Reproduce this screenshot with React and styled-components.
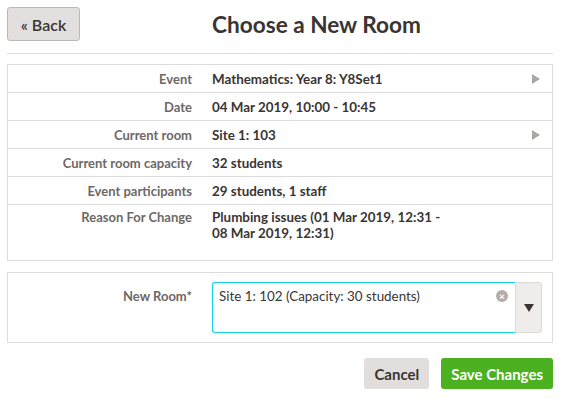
import styled, { createGlobalStyle } from "styled-components";

const Global = createGlobalStyle`
    body {
        margin: 0;
        background: #ffffff;
        font-family: Lato, "Open Sans", sans-serif;
        color: #3a3533;
    }
`;

const Page = styled.div`
    width: 561px;
    padding: 7px 8px 0 7px;
    box-sizing: border-box;
`;

const Header = styled.div`
    display: flex;
    align-items: center;
    padding-bottom: 12px;
    border-bottom: 1px solid #dddddd;
`;

const BackButton = styled.button`
    width: 73px;
    height: 34px;
    background-color: #e3dfde;
    border: 1px solid #bcb8b6;
    border-radius: 3px;
    font-family: Lato, sans-serif;
    font-size: 16px;
    font-weight: 600;
    color: #3a3533;
    padding: 0;
`;

const Title = styled.h1`
    flex: 1;
    margin: 0;
    text-align: center;
    font-size: 22.6px;
    font-weight: 700;
    color: #3a3533;
`;

const Panel = styled.div`
    margin-top: ${(p) => p.$top}px;
    border: 1px solid #dcdcdc;
`;

const Row = styled.div`
    display: grid;
    grid-template-columns: 184px 1fr 20px;
    column-gap: 20px;
    align-items: start;
    padding: ${(p) => (p.$tall ? "4px 0 19px" : "6px 0 5px")};
    font-size: 13px;
    font-weight: 700;
    line-height: 16px;
    & + & {
        border-top: 1px solid #dcdcdc;
    }
`;

const Label = styled.div`
    text-align: right;
    color: #6e6866;
`;

const Value = styled.div`
    color: #3a3533;
    font-size: 13.4px;
`;

const Arrow = styled.div`
    width: 0;
    height: 0;
    margin-top: 3px;
    border-top: 5px solid transparent;
    border-bottom: 5px solid transparent;
    border-left: 8px solid #aaa6a4;
`;

const FormRow = styled.div`
    display: grid;
    grid-template-columns: 184px 1fr;
    column-gap: 20px;
    padding: 9px 10px 9px 0;
    font-size: 13px;
    line-height: 16px;
`;

const FormLabel = styled.div`
    text-align: right;
    font-weight: 700;
    color: #6e6866;
    padding-top: 6px;
`;

const Select = styled.div`
    display: flex;
    height: 51px;
`;

const SelectBox = styled.div`
    flex: 1;
    display: flex;
    justify-content: space-between;
    align-items: flex-start;
    border: 1px solid #12d3e6;
    border-right: none;
    border-radius: 3px 0 0 3px;
    padding: 5px 7px 0 6px;
    color: #3a3533;
    font-size: 13.4px;
`;

const Clear = styled.span`
    display: flex;
    align-items: center;
    justify-content: center;
    width: 12px;
    height: 12px;
    margin-top: 2px;
    border-radius: 50%;
    background-color: #b3aeac;
    color: #ffffff;
    font-size: 10px;
    font-weight: 700;
    line-height: 1;
`;

const Toggle = styled.div`
    width: 25px;
    display: flex;
    align-items: center;
    justify-content: center;
    background-color: #efedec;
    border: 1px solid #dcdad9;
    border-radius: 0 3px 3px 0;
`;

const Caret = styled.div`
    width: 0;
    height: 0;
    border-left: 5px solid transparent;
    border-right: 5px solid transparent;
    border-top: 8px solid #3a3533;
`;

const Actions = styled.div`
    display: flex;
    justify-content: flex-end;
    gap: 12px;
    margin-top: 15px;
`;

const ActionButton = styled.button`
    height: 31px;
    padding: 0 10px;
    border: none;
    border-radius: 3px;
    font-family: Lato, sans-serif;
    font-size: 15px;
    font-weight: 700;
    background-color: ${(p) => (p.$primary ? "#4cb121" : "#e2dedd")};
    color: ${(p) => (p.$primary ? "#ffffff" : "#3a3533")};
`;

const details = [
    { label: "Event", value: "Mathematics: Year 8: Y8Set1", link: true },
    { label: "Date", value: "04 Mar 2019, 10:00 - 10:45" },
    { label: "Current room", value: "Site 1: 103", link: true },
    { label: "Current room capacity", value: "32 students" },
    { label: "Event participants", value: "29 students, 1 staff" },
];

function App() {
    return (
        <Page>
            <Global />
            <Header>
                <BackButton>« Back</BackButton>
                <Title>Choose a New Room</Title>
            </Header>
            <Panel $top={10}>
                {details.map((d) => (
                    <Row key={d.label}>
                        <Label>{d.label}</Label>
                        <Value>{d.value}</Value>
                        {d.link ? <Arrow /> : <div />}
                    </Row>
                ))}
                <Row $tall>
                    <Label>Reason For Change</Label>
                    <Value>
                        Plumbing issues (01 Mar 2019, 12:31 -
                        <br />
                        08 Mar 2019, 12:31)
                    </Value>
                    <div />
                </Row>
            </Panel>
            <Panel $top={11}>
                <FormRow>
                    <FormLabel>New Room*</FormLabel>
                    <Select>
                        <SelectBox>
                            <span>Site 1: 102 (Capacity: 30 students)</span>
                            <Clear>×</Clear>
                        </SelectBox>
                        <Toggle>
                            <Caret />
                        </Toggle>
                    </Select>
                </FormRow>
            </Panel>
            <Actions>
                <ActionButton>Cancel</ActionButton>
                <ActionButton $primary>Save Changes</ActionButton>
            </Actions>
        </Page>
    );
}

export default App;
